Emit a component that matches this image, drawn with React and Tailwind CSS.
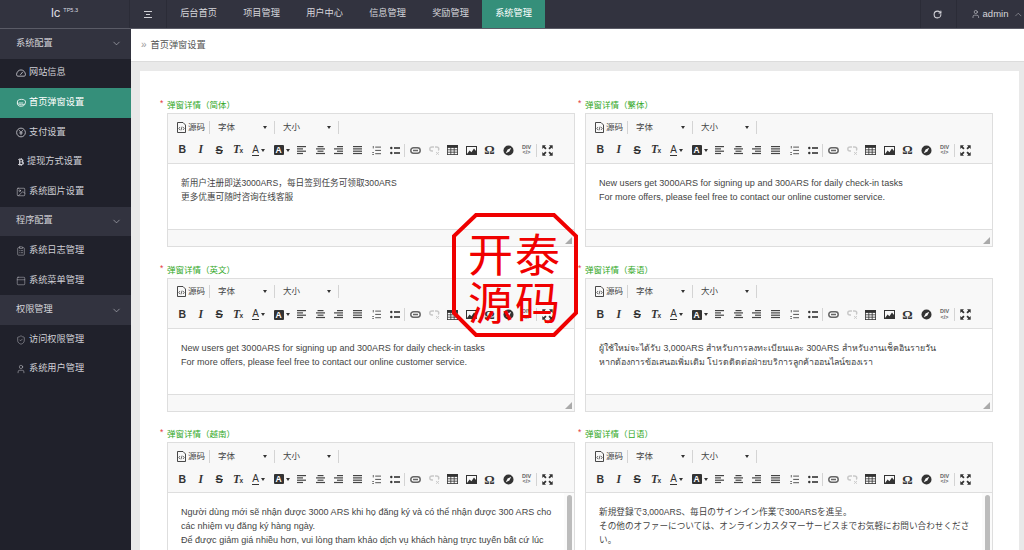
import React from "react";
import { ChevronDown, ChevronUp, Image, ClipboardList, PanelTop, ShieldCheck, User, RotateCw } from "lucide-react";
import { FaBtc } from "react-icons/fa";

const cjk = "font-['Liberation_Sans','Noto_Sans_CJK_SC',sans-serif]";

const Caret = ({ className = "" }) => (
  <span className={`inline-block w-0 h-0 border-l-[2.5px] border-r-[2.5px] border-t-[3px] border-l-transparent border-r-transparent border-t-[#333] ${className}`} />
);

const Sep = ({ w = "w-[2.25px]" }) => (
  <span className={`${w} flex shrink-0 items-center`}><span className="w-px h-[13px] bg-[#d4d4d4]" /></span>
);

const Btn = ({ children, wide }) => (
  <span className={`${wide ? "w-[23px]" : "w-[18.5px]"} h-[14px] shrink-0 flex items-center justify-center text-[#333]`}>{children}</span>
);

const AlignIcon = ({ kind }) => {
  const rows = {
    l: [[0, 9], [0, 6], [0, 9], [0, 6]],
    c: [[1.5, 6], [0, 9], [1.5, 6], [0, 9]],
    r: [[3, 6], [0, 9], [3, 6], [0, 9]],
    j: [[0, 9], [0, 9], [0, 9], [0, 9]],
  }[kind];
  return (
    <svg width="10" height="9" viewBox="0 0 10 9">
      {rows.map(([x, w], i) => <rect key={i} x={x} y={i * 2.3} width={w} height="1.2" fill="#444" />)}
    </svg>
  );
};

const Toolbar = () => (
  <div className="h-[50px] bg-[#f8f8f8] border-b border-[#dedede] pl-[5px] pt-[5px]">
    <div className="h-[16px] flex items-center text-[8.5px] text-[#444]">
      <span className="w-[36px] shrink-0 flex items-center pl-[4px] gap-[2px]">
        <svg width="9" height="11" viewBox="0 0 9 11" fill="none" stroke="#333" strokeWidth="0.9">
          <path d="M0.5 0.5 H6 L8.5 3 V10.5 H0.5 Z" />
          <path d="M3 5 L1.8 6.5 L3 8 M6 5 L7.2 6.5 L6 8 M5 4.6 L4 8.4" strokeWidth="0.7" />
        </svg>
        <span>源码</span>
      </span>
      <Sep w="w-px" />
      <span className="w-[64px] shrink-0 flex items-center justify-between pl-[8px] pr-[7px]"><span>字体</span><Caret /></span>
      <Sep w="w-px" />
      <span className="w-[63px] shrink-0 flex items-center justify-between pl-[8px] pr-[7px]"><span>大小</span><Caret /></span>
      <Sep w="w-px" />
    </div>
    <div className="mt-[8px] h-[14px] flex items-center">
      <Btn><span className="text-[10.5px] font-bold">B</span></Btn>
      <Btn><span className="text-[11.5px] font-bold italic font-['Liberation_Serif',serif]">I</span></Btn>
      <Btn><span className="text-[11px] font-bold line-through">S</span></Btn>
      <Btn><span className="text-[11.5px] font-bold italic font-['Liberation_Serif',serif] tracking-[-0.5px]">T<span className="text-[6.5px] not-italic font-bold font-['Liberation_Sans',sans-serif]">x</span></span></Btn>
      <Btn wide>
        <span className="flex items-center gap-[2px]">
          <span className="text-[10px] leading-[10px] font-normal border-b border-[#333]">A</span><Caret />
        </span>
      </Btn>
      <Btn wide>
        <span className="flex items-center gap-[2px]">
          <span className="w-[10px] h-[10px] bg-[#333] text-white text-[8.5px] leading-[10px] font-bold text-center rounded-[1px]">A</span><Caret />
        </span>
      </Btn>
      <Btn><AlignIcon kind="l" /></Btn>
      <Btn><AlignIcon kind="c" /></Btn>
      <Btn><AlignIcon kind="r" /></Btn>
      <Btn><AlignIcon kind="j" /></Btn>
      <Btn>
        <svg width="9" height="9" viewBox="0 0 9 9" fill="#555">
          <rect x="3.2" y="0.6" width="5.8" height="1" /><rect x="3.2" y="3.9" width="5.8" height="1" /><rect x="3.2" y="7.2" width="5.8" height="1" />
          <rect x="0.8" y="0" width="0.9" height="2.4" /><rect x="0.2" y="6" width="1.8" height="0.8" /><rect x="0.2" y="8" width="1.8" height="0.8" />
        </svg>
      </Btn>
      <Btn>
        <svg width="10" height="9" viewBox="0 0 10 9" fill="#333">
          <circle cx="1.3" cy="2" r="1.2" /><circle cx="1.3" cy="7" r="1.2" />
          <rect x="4" y="1.2" width="6" height="1.6" /><rect x="4" y="6.2" width="6" height="1.6" />
        </svg>
      </Btn>
      <Sep />
      <Btn>
        <svg width="11" height="7" viewBox="0 0 11 7" fill="none" stroke="#666" strokeWidth="1.5">
          <rect x="0.8" y="0.8" width="9.4" height="5.4" rx="2.7" /><path d="M3 3.5 H8" />
        </svg>
      </Btn>
      <Btn>
        <svg width="11" height="9" viewBox="0 0 11 9" fill="none" stroke="#c8c8c8" strokeWidth="1.4">
          <path d="M5 1 H3 C1.5 1 0.8 2 0.8 3 C0.8 4 1.5 5 3 5 H4 M6 1 H7.5 C9 1 9.8 2 9.8 3 C9.8 3.6 9.6 4 9.2 4.4" />
          <path d="M7 6 L10 8.8 M10 6 L7 8.8" strokeWidth="0.9" />
        </svg>
      </Btn>
      <Btn>
        <svg width="11" height="10" viewBox="0 0 11 10" fill="none" stroke="#333" strokeWidth="0.8">
          <rect x="0.4" y="0.4" width="10.2" height="9.2" />
          <rect x="0.4" y="0.4" width="10.2" height="2" fill="#333" />
          <path d="M3.8 2 V9.6 M7.2 2 V9.6 M0.4 4.8 H10.6 M0.4 7.2 H10.6" />
        </svg>
      </Btn>
      <Btn>
        <svg width="11" height="9" viewBox="0 0 11 9">
          <rect x="0.5" y="0.5" width="10" height="8" fill="none" stroke="#333" />
          <path d="M1 8 L3.6 4.6 L5.4 6.2 L8 2.6 L10 5 V8 Z" fill="#333" />
        </svg>
      </Btn>
      <Btn><span className="text-[13px] font-['Liberation_Serif',serif] font-bold">Ω</span></Btn>
      <Btn>
        <svg width="11" height="11" viewBox="0 0 11 11">
          <circle cx="5.5" cy="5.5" r="5" fill="#333" />
          <path d="M8.2 2.8 L6.4 6.4 L2.8 8.2 L4.6 4.6 Z" fill="#f8f8f8" />
        </svg>
      </Btn>
      <Btn><span className="text-[5.5px] leading-[5.5px] text-center font-bold text-[#666]">DIV<br />&lt;/&gt;</span></Btn>
      <Sep />
      <Btn>
        <svg width="11" height="11" viewBox="0 0 11 11" fill="#333">
          <path d="M0.3 0.3 H4 L2.8 1.5 L4.6 3.3 L3.3 4.6 L1.5 2.8 L0.3 4 Z" />
          <path d="M10.7 0.3 H7 L8.2 1.5 L6.4 3.3 L7.7 4.6 L9.5 2.8 L10.7 4 Z" />
          <path d="M0.3 10.7 H4 L2.8 9.5 L4.6 7.7 L3.3 6.4 L1.5 8.2 L0.3 7 Z" />
          <path d="M10.7 10.7 H7 L8.2 9.5 L6.4 7.7 L7.7 6.4 L9.5 8.2 L10.7 7 Z" />
        </svg>
      </Btn>
    </div>
  </div>
);

const Editor = ({ label, lines, scroll, lang, textClass }) => (
  <div className="h-[164.7px] shrink-0">
    <div className="h-[14px] flex items-start text-[8.5px] -ml-[7px] leading-[12px]">
      <span className="text-[#e4393c] w-[7px] leading-none">*</span>
      <span className="text-[#32a81f]">{label}</span>
    </div>
    <div className="w-[408px] h-[134px] border border-[#dedede] flex flex-col">
      <Toolbar />
      <div className={`relative h-[66px] shrink-0 overflow-hidden bg-white pl-[13px] pr-[20px] pt-[12px] text-[#444] leading-[14px] border-b border-[#dedede] ${textClass}`} lang={lang}>
        {lines.map((l, i) => <div key={i}>{l}</div>)}
        {scroll && (
          <div className="absolute right-0 top-0 bottom-0 w-[10px] bg-[#fbfbfb]">
            <div className="ml-[2.5px] mt-[2px] h-[58px] w-[5px] rounded-full bg-[#bcbcbc]" />
          </div>
        )}
      </div>
      <div className="relative flex-1 bg-[#f8f8f8]">
        <svg className="absolute right-[2px] bottom-[2px]" width="7" height="7" viewBox="0 0 7 7"><path d="M7 0 V7 H0 Z" fill="#aaa" /></svg>
      </div>
    </div>
  </div>
);

const dialIcon = (
  <svg width="11" height="10" viewBox="0 0 11 10" fill="none" stroke="currentColor" strokeWidth="0.9">
    <path d="M2 8.5 H9 C9.8 8.5 10.4 7.8 10.4 7 C10.4 4 8.2 1.6 5.5 1.6 C2.8 1.6 0.6 4 0.6 7 C0.6 7.8 1.2 8.5 2 8.5 Z" />
    <path d="M4.8 7 L7.4 3.8" />
  </svg>
);
const coinIcon = (
  <svg width="11" height="10" viewBox="0 0 11 10" fill="none" stroke="currentColor" strokeWidth="0.9">
    <ellipse cx="6" cy="4" rx="4.5" ry="3" /><path d="M1.5 4.5 C1 7 3 9 6 8.6 C8 8.4 9.5 7.4 10 6" /><path d="M3 5h5" />
  </svg>
);
const payIcon = (
  <svg width="11" height="11" viewBox="0 0 11 11" fill="none" stroke="currentColor" strokeWidth="0.9">
    <circle cx="5.5" cy="5.5" r="4.8" /><path d="M3.6 3 L5.5 5.4 L7.4 3 M3.6 6 H7.4 M5.5 5.4 V8.4" />
  </svg>
);

const SideGroup = ({ children }) => (
  <div className="h-[29.6px] bg-[#32333f] flex items-center justify-between pl-[16px] pr-[9px] text-[#d2d2d8] text-[9.2px]">
    <span>{children}</span>
    <ChevronDown size={11} strokeWidth={1.2} />
  </div>
);

const SideItem = ({ icon, children, active, tight }) => (
  <div className={`h-[29.6px] flex items-center pl-[16px] text-[9.2px] ${tight ? "gap-[1px]" : "gap-[3px]"} ${active ? "bg-[#358f7a] text-white" : "text-[#cfcfd5]"}`}>
    <span className="w-[10px] flex justify-center shrink-0">{icon}</span>
    <span>{children}</span>
  </div>
);

const nav = ["后台首页", "项目管理", "用户中心", "信息管理", "奖励管理", "系统管理"];
const zh = "text-[8.65px]";
const en = "text-[9.05px]";

export default function App() {
  return (
    <div className={`relative w-[1024px] h-[550px] overflow-hidden flex flex-col bg-[#e9e9e9] ${cjk}`}>
      <header className="h-[29px] shrink-0 bg-[#32333f] flex items-stretch text-[#d6d6db] text-[9.2px] border-b border-[#5a5b66]">
        <div className="w-[130px] shrink-0 flex items-start justify-center pt-[5px] text-[#dcdce0] border-r border-[#2b2c37]">
          <span className="text-[13px] leading-[16px]">lc</span>
          <span className="text-[5.5px] leading-[6px] ml-[3px] mt-[2px]">TP5.3</span>
        </div>
        <div className="w-[37px] shrink-0 flex items-center justify-center border-r border-[#2b2c37]">
          <svg width="8" height="7" viewBox="0 0 8 7" fill="#d0d0d5"><rect width="8" height="1" /><rect x="2" y="3" width="4" height="1" /><rect y="6" width="8" height="1" /></svg>
        </div>
        {nav.map((n, i) => (
          <div key={n} className={`w-[63px] flex items-center justify-center ${i === 5 ? "bg-[#358f7a] text-white" : ""}`}>{n}</div>
        ))}
        <div className="flex-1" />
        <div className="w-[36px] flex items-center justify-center border-l border-[#2b2c37]"><RotateCw size={9} strokeWidth={2.8} className="-ml-[2px]" /></div>
        <div className="w-[68px] flex items-center pl-[14px] gap-[2px] border-l border-[#2b2c37] text-[9.5px]">
          <User size={10} strokeWidth={1.4} />
          <span>admin</span>
          <ChevronUp size={11} strokeWidth={1} className="ml-[3px]" />
        </div>
      </header>

      <div className="flex flex-1 min-h-0">
        <aside className="w-[131px] shrink-0 bg-[#20212b]">
          <SideGroup>系统配置</SideGroup>
          <SideItem icon={dialIcon}>网站信息</SideItem>
          <SideItem active icon={coinIcon}>首页弹窗设置</SideItem>
          <SideItem icon={payIcon}>支付设置</SideItem>
          <SideItem tight icon={<FaBtc size={8} />}>提现方式设置</SideItem>
          <SideItem icon={<Image size={10} strokeWidth={1.3} />}>系统图片设置</SideItem>
          <SideGroup>程序配置</SideGroup>
          <SideItem icon={<ClipboardList size={10} strokeWidth={1.1} />}>系统日志管理</SideItem>
          <SideItem icon={<PanelTop size={10} strokeWidth={1.1} />}>系统菜单管理</SideItem>
          <SideGroup>权限管理</SideGroup>
          <SideItem icon={<ShieldCheck size={10} strokeWidth={1.1} />}>访问权限管理</SideItem>
          <SideItem icon={<User size={10} strokeWidth={1.2} />}>系统用户管理</SideItem>
        </aside>

        <main className="flex-1 min-w-0 flex flex-col">
          <div className="h-[33px] shrink-0 bg-white border-b border-[#dcdcdc] flex items-center pl-[10px] gap-[4px] text-[9.2px] text-[#555]">
            <span className="text-[#999] text-[10px] leading-[10px]">»</span>
            <span className="mt-[1px]">首页弹窗设置</span>
          </div>
          <div className="flex-1 min-h-0 pl-[9px] pr-[5px] pt-[9px]">
            <div className="h-full bg-white pt-[28px] pl-[27px]">
              <div className="grid grid-cols-[408px_408px] gap-x-[10px]">
                <Editor textClass={zh} label="弹窗详情（简体）" lines={["新用户注册即送3000ARS，每日签到任务可领取300ARS", "更多优惠可随时咨询在线客服"]} />
                <Editor textClass={en} label="弹窗详情（繁体）" lines={["New users get 3000ARS for signing up and 300ARS for daily check-in tasks", "For more offers, please feel free to contact our online customer service."]} />
                <Editor textClass={en} label="弹窗详情（英文）" lines={["New users get 3000ARS for signing up and 300ARS for daily check-in tasks", "For more offers, please feel free to contact our online customer service."]} />
                <Editor textClass="text-[8.8px]" label="弹窗详情（泰语）" lang="th" lines={["ผู้ใช้ใหม่จะได้รับ 3,000ARS สำหรับการลงทะเบียนและ 300ARS สำหรับงานเช็คอินรายวัน", "หากต้องการข้อเสนอเพิ่มเติม โปรดติดต่อฝ่ายบริการลูกค้าออนไลน์ของเรา"]} />
                <Editor textClass={en} scroll label="弹窗详情（越南）" lines={["Người dùng mới sẽ nhận được 3000 ARS khi họ đăng ký và có thể nhận được 300 ARS cho các nhiệm vụ đăng ký hàng ngày.", "Để được giảm giá nhiều hơn, vui lòng tham khảo dịch vụ khách hàng trực tuyến bất cứ lúc"]} />
                <Editor textClass={zh} scroll lang="ja" label="弹窗详情（日语）" lines={["新規登録で3,000ARS、毎日のサインイン作業で300ARSを進呈。", "その他のオファーについては、オンラインカスタマーサービスまでお気軽にお問い合わせください。"]} />
              </div>
            </div>
          </div>
        </main>
      </div>

      {/* stamp overlay */}
      <div className="absolute left-[452px] top-[213px] w-[126px] h-[124px] text-[#f00000]">
        <svg className="absolute inset-0" width="126" height="124" viewBox="0 0 126 124" fill="none" stroke="#ef0000" strokeWidth="4">
          <path d="M24 2 H102 L124 23 V100 L102 122 H24 L2 100 V23 Z" />
        </svg>
        <div className="absolute left-[15px] top-[16px] grid grid-cols-[47px_47px] grid-rows-[48px_48px] text-[45px] leading-[48px] text-center font-['Noto_Sans_CJK_SC',sans-serif] font-normal">
          <span>开</span><span>泰</span><span>源</span><span>码</span>
        </div>
      </div>
    </div>
  );
}
